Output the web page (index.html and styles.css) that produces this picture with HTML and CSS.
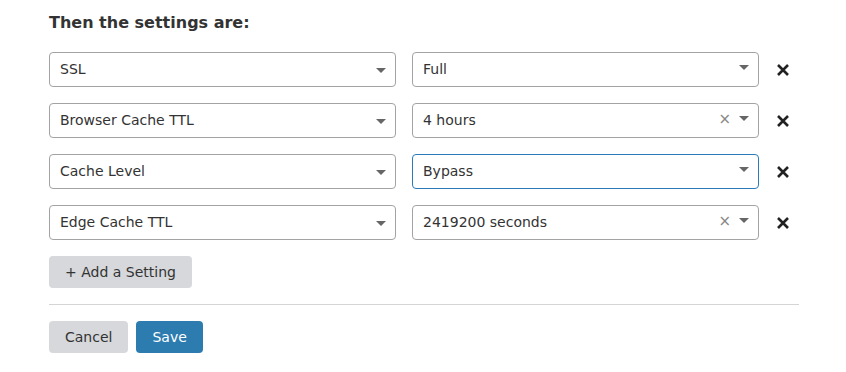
FILE: index.html
```html
<!DOCTYPE html>
<html>
<head>
<meta charset="utf-8">
<link rel="stylesheet" href="styles.css">
</head>
<body>
<div class="panel">
  <h2 class="title">Then the settings are:</h2>
  <div class="rows">
    <div class="row">
      <div class="select"><span class="value">SSL</span><span class="arrow"></span></div>
      <div class="select"><span class="value">Full</span><span class="arrow up"></span></div>
      <button class="remove" aria-label="Remove"><svg width="14" height="14" viewBox="0 0 14 14"><path d="M2 2L12 12M12 2L2 12" stroke="#222" stroke-width="2.6"/></svg></button>
    </div>
    <div class="row">
      <div class="select"><span class="value">Browser Cache TTL</span><span class="arrow"></span></div>
      <div class="select"><span class="value">4 hours</span><span class="clear">×</span><span class="arrow up"></span></div>
      <button class="remove" aria-label="Remove"><svg width="14" height="14" viewBox="0 0 14 14"><path d="M2 2L12 12M12 2L2 12" stroke="#222" stroke-width="2.6"/></svg></button>
    </div>
    <div class="row">
      <div class="select"><span class="value">Cache Level</span><span class="arrow"></span></div>
      <div class="select focused"><span class="value">Bypass</span><span class="arrow up"></span></div>
      <button class="remove" aria-label="Remove"><svg width="14" height="14" viewBox="0 0 14 14"><path d="M2 2L12 12M12 2L2 12" stroke="#222" stroke-width="2.6"/></svg></button>
    </div>
    <div class="row">
      <div class="select"><span class="value">Edge Cache TTL</span><span class="arrow"></span></div>
      <div class="select"><span class="value">2419200 seconds</span><span class="clear">×</span><span class="arrow up"></span></div>
      <button class="remove" aria-label="Remove"><svg width="14" height="14" viewBox="0 0 14 14"><path d="M2 2L12 12M12 2L2 12" stroke="#222" stroke-width="2.6"/></svg></button>
    </div>
  </div>
  <button class="btn btn-grey add">+ Add a Setting</button>
  <hr class="divider">
  <div class="actions">
    <button class="btn btn-grey">Cancel</button>
    <button class="btn btn-blue">Save</button>
  </div>
</div>
</body>
</html>
```
FILE: styles.css
```css
* { box-sizing: border-box; }
body {
  margin: 0;
  background: #fff;
  font-family: "DejaVu Sans", sans-serif;
  color: #333;
}
.panel {
  width: 799px;
  padding: 13px 0 0 49px;
}
.title {
  margin: 0;
  font-size: 16px;
  line-height: 20px;
  font-weight: bold;
  color: #333;
}
.rows {
  margin-top: 19px;
  display: flex;
  flex-direction: column;
  gap: 16px;
}
.row {
  display: flex;
  align-items: center;
}
.select {
  width: 347px;
  height: 35px;
  border: 1px solid #a3a3a3;
  border-radius: 4px;
  display: flex;
  align-items: center;
  padding: 0 9px 0 10px;
  font-size: 14px;
  color: #333;
  background: #fff;
}
.select + .select { margin-left: 16px; }
.select.focused { border-color: #2b7bb9; }
.value { flex: 1; margin-top: -1px; }
.arrow {
  width: 0; height: 0;
  border-left: 5px solid transparent;
  border-right: 5px solid transparent;
  border-top: 5px solid #666;
  margin-top: 1px;
}
.arrow.up { margin-top: -4px; }
.clear {
  font-size: 15px;
  color: #888;
  margin-right: 8px;
  margin-top: -3px;
}
.remove {
  margin-left: 17px;
  width: 14px;
  height: 14px;
  padding: 0;
  border: 0;
  background: none;
  display: flex;
}
.btn {
  font-family: "DejaVu Sans", sans-serif;
  font-size: 14px;
  height: 32px;
  border: 0;
  border-radius: 4px;
  padding: 0 16px;
  cursor: pointer;
}
.btn-grey { background: #d6d8db; color: #333; }
.btn-blue { background: #2c7cb0; color: #fff; }
.add { margin-top: 16px; display: block; }
.divider {
  margin: 16px 0 0 0;
  border: 0;
  border-top: 1px solid #d5d5d5;
  height: 0;
  width: 750px;
}
.actions {
  margin-top: 16px;
  display: flex;
  gap: 8px;
}
```
